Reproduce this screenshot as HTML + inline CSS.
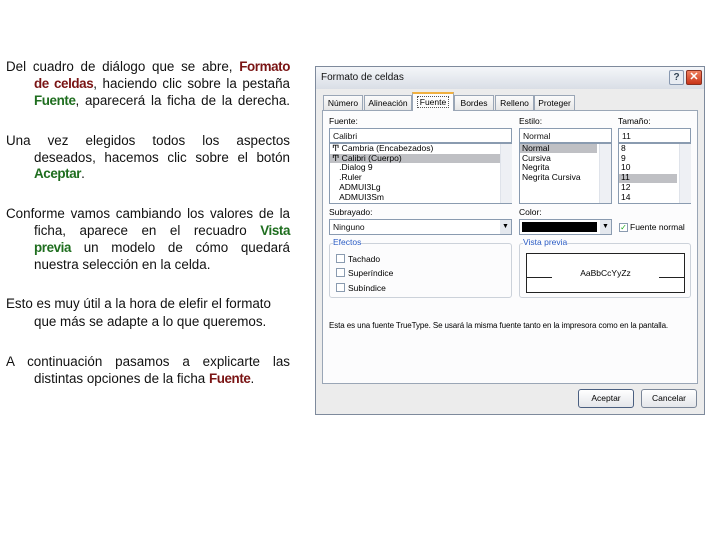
<!DOCTYPE html><html><head><meta charset="utf-8"><style>
body{margin:0;width:720px;height:540px;background:#fff;position:relative;overflow:hidden;font-family:"Liberation Sans",sans-serif}
.l{position:absolute;font-size:13.4px;line-height:17px;color:#111;white-space:nowrap}
.j{text-align:justify;text-align-last:justify;white-space:normal;height:17px}
.f{left:6px;width:284px}.i{left:34px;width:256px}
.r{color:#7a1414;font-weight:bold;letter-spacing:-0.4px}.g{color:#1f6e1f;font-weight:bold;letter-spacing:-0.4px}
.a{position:absolute;box-sizing:border-box}
.d{font-size:8.5px;color:#111}
.in{background:#fff;border:1px solid #8a9bb0}
.lab{position:absolute;font-size:8.5px}
.tab{position:absolute;top:95px;height:15px;border:1px solid #9aa6b6;border-bottom:none;background:linear-gradient(#fbfbfb,#e6e6e6);font-size:8.5px;text-align:center;line-height:14px;box-sizing:border-box}
.cb{position:absolute;width:9px;height:9px;border:1px solid #8a9bb0;background:#fff;box-sizing:border-box}
.sb{position:absolute;width:11px;background:#eef0f4;border-left:1px solid #dfe3ea}
.btn{position:absolute;top:389px;height:19px;width:56px;border:1px solid #4a5f80;border-radius:3px;background:linear-gradient(#fff,#e4e6ea);font-size:8.5px;text-align:center;line-height:17px;box-sizing:border-box}
.li{position:absolute;font-size:8.5px;line-height:9.7px}
</style></head><body>
<div class="l j f" style="top:58px">Del cuadro de diálogo que se abre, <span class="r">Formato</span></div>
<div class="l j i" style="top:75px"><span class="r">de celdas</span>, haciendo clic sobre la pestaña</div>
<div class="l j i" style="top:92px"><span class="g">Fuente</span>, aparecerá la ficha de la derecha.</div>
<div class="l j f" style="top:132px">Una vez elegidos todos los aspectos</div>
<div class="l j i" style="top:149px">deseados, hacemos clic sobre el botón</div>
<div class="l i" style="top:165px"><span class="g">Aceptar</span>.</div>
<div class="l j f" style="top:205px">Conforme vamos cambiando los valores de la</div>
<div class="l j i" style="top:222px">ficha, aparece en el recuadro <span class="g">Vista</span></div>
<div class="l j i" style="top:239px"><span class="g">previa</span> un modelo de cómo quedará</div>
<div class="l i" style="top:256px">nuestra selección en la celda.</div>
<div class="l f" style="top:295px">Esto es muy útil a la hora de elefir el formato</div>
<div class="l i" style="top:313px">que más se adapte a lo que queremos.</div>
<div class="l j f" style="top:353px">A continuación pasamos a explicarte las</div>
<div class="l i" style="top:370px">distintas opciones de la ficha <span class="r">Fuente</span>.</div>

<div class="a d" style="left:315px;top:66px;width:390px;height:349px;background:#ececec;border:1px solid #7e8a9c">
<div class="a" style="left:0;top:0;width:388px;height:22px;background:linear-gradient(#f4f6f9,#d9dee6);font-size:10px;line-height:22px;padding-left:5px">Formato de celdas</div>
<div class="a" style="left:353px;top:3px;width:15px;height:15px;border:1px solid #8898b0;border-radius:2px;background:#e8ecf2;text-align:center;font-size:10px;line-height:13px;font-weight:bold;color:#345">?</div>
<div class="a" style="left:370px;top:3px;width:16px;height:15px;border:1px solid #8a3020;border-radius:2px;background:linear-gradient(#f08060,#c83418);text-align:center;font-size:11px;line-height:13px;font-weight:bold;color:#fff">✕</div>
</div>
<div class="tab" style="left:323px;width:40px">Número</div>
<div class="tab" style="left:364px;width:48px">Alineación</div>
<div class="tab" style="left:495px;width:39px">Relleno</div>
<div class="tab" style="left:534px;width:41px">Proteger</div>
<div class="tab" style="left:454px;width:40px">Bordes</div>
<div class="a" style="left:322px;top:110px;width:376px;height:274px;background:#fcfcfd;border:1px solid #9aa6b6"></div>
<div class="tab" style="left:412px;width:42px;top:92px;height:19px;background:#fcfcfd;border-top:2px solid #f0b040;line-height:16px"><span style="border:1px dotted #555;padding:0 2px">Fuente</span></div>

<div class="lab" style="left:329px;top:116px">Fuente:</div>
<div class="lab" style="left:519px;top:116px">Estilo:</div>
<div class="lab" style="left:618px;top:116px">Tamaño:</div>
<div class="a in d" style="left:329px;top:128px;width:183px;height:15px;padding:2px 3px">Calibri</div>
<div class="a in d" style="left:519px;top:128px;width:93px;height:15px;padding:2px 3px">Normal</div>
<div class="a in d" style="left:618px;top:128px;width:73px;height:15px;padding:2px 3px">11</div>
<div class="a in" style="left:329px;top:143px;width:183px;height:61px"></div>
<div class="a in" style="left:519px;top:143px;width:93px;height:61px"></div>
<div class="a in" style="left:618px;top:143px;width:73px;height:61px"></div>
<div class="a" style="left:330px;top:154px;width:170px;height:9px;background:#bfc0c4"></div>
<div class="a" style="left:520px;top:144px;width:77px;height:9px;background:#bfc0c4"></div>
<div class="a" style="left:619px;top:174px;width:58px;height:9px;background:#bfc0c4"></div>
<div class="sb" style="left:500px;top:144px;height:59px"></div>
<div class="sb" style="left:599px;top:144px;height:59px"></div>
<div class="sb" style="left:679px;top:144px;height:59px"></div>
<div class="li" style="left:332px;top:144px">Ͳ Cambria (Encabezados)<br>Ͳ Calibri (Cuerpo)<br>&nbsp;&nbsp;&nbsp;.Dialog 9<br>&nbsp;&nbsp;&nbsp;.Ruler<br>&nbsp;&nbsp;&nbsp;ADMUI3Lg<br>&nbsp;&nbsp;&nbsp;ADMUI3Sm</div>
<div class="li" style="left:522px;top:144px">Normal<br>Cursiva<br>Negrita<br>Negrita Cursiva</div>
<div class="li" style="left:621px;top:144px">8<br>9<br>10<br>11<br>12<br>14</div>
<div class="lab" style="left:329px;top:207px">Subrayado:</div>
<div class="lab" style="left:519px;top:207px">Color:</div>
<div class="a in d" style="left:329px;top:219px;width:183px;height:16px;padding:2px 3px">Ninguno</div>
<div class="a" style="left:500px;top:220px;width:11px;height:14px;background:#e4e8ee;font-size:7px;text-align:center;line-height:14px">▼</div>
<div class="a in" style="left:519px;top:219px;width:93px;height:16px"></div>
<div class="a" style="left:522px;top:222px;width:75px;height:10px;background:#000"></div>
<div class="a" style="left:600px;top:220px;width:11px;height:14px;background:#e4e8ee;font-size:7px;text-align:center;line-height:14px">▼</div>
<div class="cb" style="left:619px;top:223px;color:#2a2;font-size:8px;line-height:7px;text-align:center">✓</div>
<div class="lab" style="left:630px;top:222px">Fuente normal</div>
<div class="a" style="left:329px;top:243px;width:183px;height:55px;border:1px solid #ccd2da;border-radius:3px"></div>
<div class="lab" style="left:333px;top:237px;color:#2b5cc4;background:#fcfcfd">Efectos</div>
<div class="cb" style="left:336px;top:254px"></div><div class="lab" style="left:348px;top:254px">Tachado</div>
<div class="cb" style="left:336px;top:268px"></div><div class="lab" style="left:348px;top:268px">Superíndice</div>
<div class="cb" style="left:336px;top:283px"></div><div class="lab" style="left:348px;top:283px">Subíndice</div>
<div class="a" style="left:519px;top:243px;width:172px;height:55px;border:1px solid #ccd2da;border-radius:3px"></div>
<div class="lab" style="left:523px;top:237px;color:#2b5cc4;background:#fcfcfd">Vista previa</div>
<div class="a" style="left:526px;top:253px;width:159px;height:40px;border:1px solid #222;background:#fff"></div>
<div class="a" style="left:526px;top:277px;width:26px;height:1px;background:#222"></div>
<div class="a" style="left:659px;top:277px;width:26px;height:1px;background:#222"></div>
<div class="lab" style="left:526px;top:268px;width:159px;text-align:center">AaBbCcYyZz</div>
<div class="lab" style="left:329px;top:321px;font-size:8px;letter-spacing:-0.1px">Esta es una fuente TrueType. Se usará la misma fuente tanto en la impresora como en la pantalla.</div>
<div class="btn" style="left:578px">Aceptar</div>
<div class="btn" style="left:641px;border-color:#7a8698">Cancelar</div>
</body></html>
